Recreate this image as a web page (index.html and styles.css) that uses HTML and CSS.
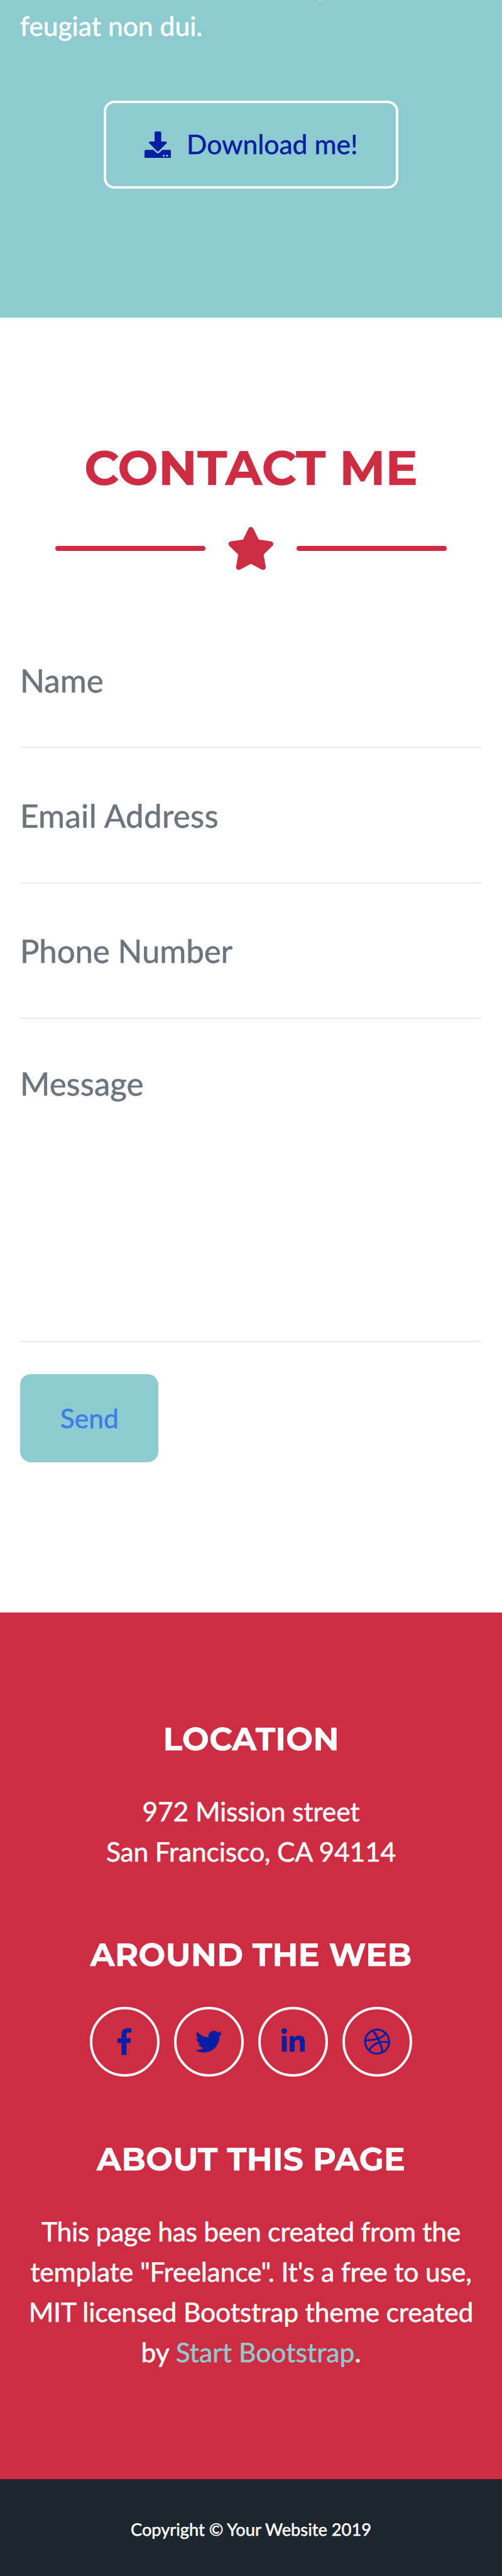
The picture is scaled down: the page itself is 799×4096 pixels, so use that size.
FILE: index.html
```html
<!DOCTYPE html>
<html lang="en">
<head>
<meta charset="utf-8">
<title>Contact</title>
<link rel="stylesheet" href="styles.css">
</head>
<body>
<section class="about">
  <p class="lead"><span class="lead-prev">p</span><br>feugiat non dui.</p>
  <a class="btn btn-outline">
    <svg class="icon" viewBox="0 0 512 512"><path d="M216 0h80c13.3 0 24 10.7 24 24v168h87.7c17.8 0 26.7 21.5 14.1 34.1L269.7 378.3c-7.5 7.5-19.8 7.5-27.3 0L90.1 226.1c-12.6-12.6-3.7-34.1 14.1-34.1H192V24c0-13.3 10.7-24 24-24zm296 376v112c0 13.3-10.7 24-24 24H24c-13.3 0-24-10.7-24-24V376c0-13.3 10.7-24 24-24h146.7l49 49c20.1 20.1 52.5 20.1 72.6 0l49-49H488c13.3 0 24 10.7 24 24zm-124 88c0-11-9-20-20-20s-20 9-20 20 9 20 20 20 20-9 20-20zm64 0c0-11-9-20-20-20s-20 9-20 20 9 20 20 20 20-9 20-20z"/></svg>
    <span>Download me!</span>
  </a>
</section>

<section class="contact">
  <h2 class="heading">CONTACT ME</h2>
  <div class="divider">
    <span class="divider-line"></span>
    <svg class="star" viewBox="0 0 576 512"><path d="M259.3 17.8L194 150.2 47.9 171.5c-26.2 3.8-36.7 36.1-17.7 54.6l105.7 103-25 145.5c-4.5 26.3 23.2 46 46.4 33.7L288 439.6l130.7 68.7c23.2 12.2 50.9-7.4 46.4-33.7l-25-145.5 105.7-103c19-18.5 8.5-50.8-17.7-54.6L382 150.2 316.7 17.8c-11.7-23.6-45.6-23.9-57.4 0z"/></svg>
    <span class="divider-line"></span>
  </div>
  <form class="form">
    <div class="field">Name</div>
    <div class="field loose">Email Address</div>
    <div class="field snug">Phone Number</div>
    <div class="field field-message">Message</div>
    <button type="button" class="btn btn-send">Send</button>
  </form>
</section>

<footer class="footer">
  <h4 class="title">LOCATION</h4>
  <p class="text snug">972 Mission street<br>San Francisco, CA 94114</p>
  <h4 class="title title-next title-web">AROUND THE WEB</h4>
  <div class="social">
    <a class="circle"><svg class="icon" viewBox="0 0 264 512"><path d="M215.8 85H264V3.6C255.7 2.5 227.1 0 193.8 0 124.3 0 76.7 42.4 76.7 120.3V192H0v91h76.7v229h94V283h73.6l11.7-91h-85.3v-62.7c0-26.3 7.3-44.3 45.1-44.3z"/></svg></a>
    <a class="circle"><svg class="icon" viewBox="0 0 512 512"><path d="M459.37 151.716c.325 4.548.325 9.097.325 13.645 0 138.72-105.583 298.558-298.558 298.558-59.452 0-114.68-17.219-161.137-47.106 8.447.974 16.568 1.299 25.34 1.299 49.055 0 94.213-16.568 130.274-44.832-46.132-.975-84.792-31.188-98.112-72.772 6.498.974 12.995 1.624 19.818 1.624 9.421 0 18.843-1.3 27.614-3.573-48.081-9.747-84.143-51.98-84.143-102.985v-1.299c13.969 7.797 30.214 12.67 47.431 13.319-28.264-18.843-46.781-51.005-46.781-87.391 0-19.492 5.197-37.36 14.294-52.954 51.655 63.675 129.3 105.258 216.365 109.807-1.624-7.797-2.599-15.918-2.599-24.04 0-57.828 46.782-104.934 104.934-104.934 30.213 0 57.502 12.67 76.67 33.137 23.715-4.548 46.456-13.32 66.599-25.34-7.798 24.366-24.366 44.833-46.132 57.827 21.117-2.273 41.584-8.122 60.426-16.243-14.292 20.791-32.161 39.308-52.628 54.253z"/></svg></a>
    <a class="circle"><svg class="icon" viewBox="0 0 448 512"><path d="M100.3 448H7.4V148.9h92.9V448zM53.8 108.1C24.1 108.1 0 83.5 0 53.8S24.1 0 53.8 0s53.8 24.1 53.8 53.8-24.1 54.3-53.8 54.3zM448 448h-92.7V302.4c0-34.7-.7-79.2-48.3-79.2-48.3 0-55.7 37.7-55.7 76.7V448h-92.8V148.9h89.1v40.8h1.3c12.4-23.5 42.7-48.3 87.9-48.3 94 0 111.3 61.9 111.3 142.3V448z"/></svg></a>
    <a class="circle"><svg class="icon" viewBox="0 0 512 512"><path d="M256 8C119.252 8 8 119.252 8 256s111.252 248 248 248 248-111.252 248-248S392.748 8 256 8zm163.97 114.366c29.503 36.046 47.369 81.957 47.835 131.955-6.984-1.477-77.018-15.682-147.502-6.818-5.752-14.041-11.181-26.393-18.617-41.614 78.321-31.977 113.818-77.482 118.284-83.523zM396.421 97.87c-3.81 5.427-35.697 48.286-111.021 76.519-34.712-63.776-73.185-116.168-79.04-124.008 67.176-16.193 137.966 1.27 190.061 47.489zm-230.48-33.25c5.585 7.659 43.438 60.116 78.537 122.509-99.087 26.313-186.36 25.934-195.834 25.809C62.38 147.205 106.678 92.573 165.941 64.62zM44.17 256.323c0-2.166.043-4.322.108-6.473 9.268.19 111.92 1.513 217.706-30.146 6.064 11.868 11.857 23.915 17.174 35.949-76.599 21.575-146.194 83.527-180.531 142.306C64.794 360.405 44.17 310.73 44.17 256.323zm81.807 167.113c22.127-45.233 82.178-103.622 167.579-132.756 29.74 77.283 42.039 142.053 45.189 160.638-68.112 29.013-150.015 21.053-212.768-27.882zm248.38 8.489c-2.171-12.886-13.446-74.897-41.152-151.033 66.38-10.626 124.7 6.768 131.947 9.055-9.442 58.941-43.273 109.844-90.795 141.978z"/></svg></a>
  </div>
  <h4 class="title title-next">ABOUT THIS PAGE</h4>
  <p class="text"><span class="tight">This page has been created from the</span><br><span class="snug">template "Freelance". It's a free to use,</span><br><span class="snug">MIT licensed Bootstrap theme created</span><br>by <a class="link">Start Bootstrap</a>.</p>
</footer>

<section class="copyright">Copyright © Your Website 2019</section>
</body>
</html>
```
FILE: styles.css
```css
* { box-sizing: border-box; }
html { font-size: 71.0222px; }
body {
  margin: 0;
  width: 11.25rem;
  font-family: Lato, "Liberation Sans", sans-serif;
  font-size: .6rem;
  line-height: .9rem;
  background: #fff;
  text-rendering: geometricPrecision;
  -webkit-text-stroke: .55px currentColor;
}
h2, h4, p { margin: 0; }
svg { display: block; fill: currentColor; }

.loose { letter-spacing: .3px; }
.snug { letter-spacing: -.17px; }
.tight { letter-spacing: -.33px; }

.about {
  display: flex;
  flex-direction: column;
  align-items: center;
  height: 7.105rem;
  overflow: hidden;
  background: #8ecbd0;
  color: #fff;
}
.lead {
  align-self: stretch;
  flex: none;
  height: 1.8rem;
  margin: -.757rem 0 1.207rem;
  padding-left: .45rem;
  white-space: nowrap;
}
.lead-prev { padding-left: 6.65rem; }
.btn {
  display: flex;
  align-items: center;
  justify-content: center;
  height: 1.98rem;
  border-radius: .24rem;
  font: inherit;
}
.btn-outline {
  flex: none;
  width: 6.61rem;
  gap: .35rem;
  border: .06rem solid #f8f9fa;
  color: #071ea3;
}
.icon { height: .6rem; }

.contact {
  height: 28.995rem;
  padding: 2.85rem .45rem 0;
}
.heading {
  font: 700 1.08rem/1.08rem Montserrat, Inter, sans-serif;
  -webkit-text-stroke: .3px currentColor;
  color: #ce2c42;
  text-align: center;
  white-space: nowrap;
}
.divider {
  display: flex;
  align-items: center;
  justify-content: center;
  gap: .48rem;
  margin-top: .76rem;
  color: #ce2c42;
}
.divider-line {
  width: 3.36rem;
  height: .12rem;
  border-radius: .48rem;
  background: currentColor;
}
.star { width: 1.08rem; height: .96rem; }
.form { padding-top: .96rem; }
.field {
  height: 3.032rem;
  padding-top: .98rem;
  border-bottom: .03rem solid #e9ecef;
  font-size: .72rem;
  line-height: 1.08rem;
  color: #6c757d;
}
.field-message { height: 7.235rem; padding-top: .915rem; }
.btn-send {
  width: 3.105rem;
  margin-top: .715rem;
  border: 0;
  background: #8ecbd0;
  color: #3b7de9;
}

.footer {
  height: 19.4rem;
  padding-top: 2.415rem;
  background: #ce2c42;
  color: #fff;
  text-align: center;
}
.title {
  margin-bottom: .74rem;
  font: 700 .72rem/.864rem Montserrat, Inter, sans-serif;
  -webkit-text-stroke: .3px currentColor;
  white-space: nowrap;
}
.title-next { margin-top: 1.425rem; }
.title-web { margin-bottom: .725rem; }
.text { white-space: nowrap; }
.social { display: flex; justify-content: center; gap: .33rem; }
.circle {
  display: flex;
  align-items: center;
  justify-content: center;
  width: 1.56rem;
  height: 1.56rem;
  border: .06rem solid #f8f9fa;
  border-radius: 50%;
  color: #071ea3;
}
.link { color: #8ecbd0; }

.copyright {
  height: 2.17rem;
  background: #1d252f;
  color: #fff;
  font-size: .384rem;
  line-height: 2.24rem;
  text-align: center;
}
```
